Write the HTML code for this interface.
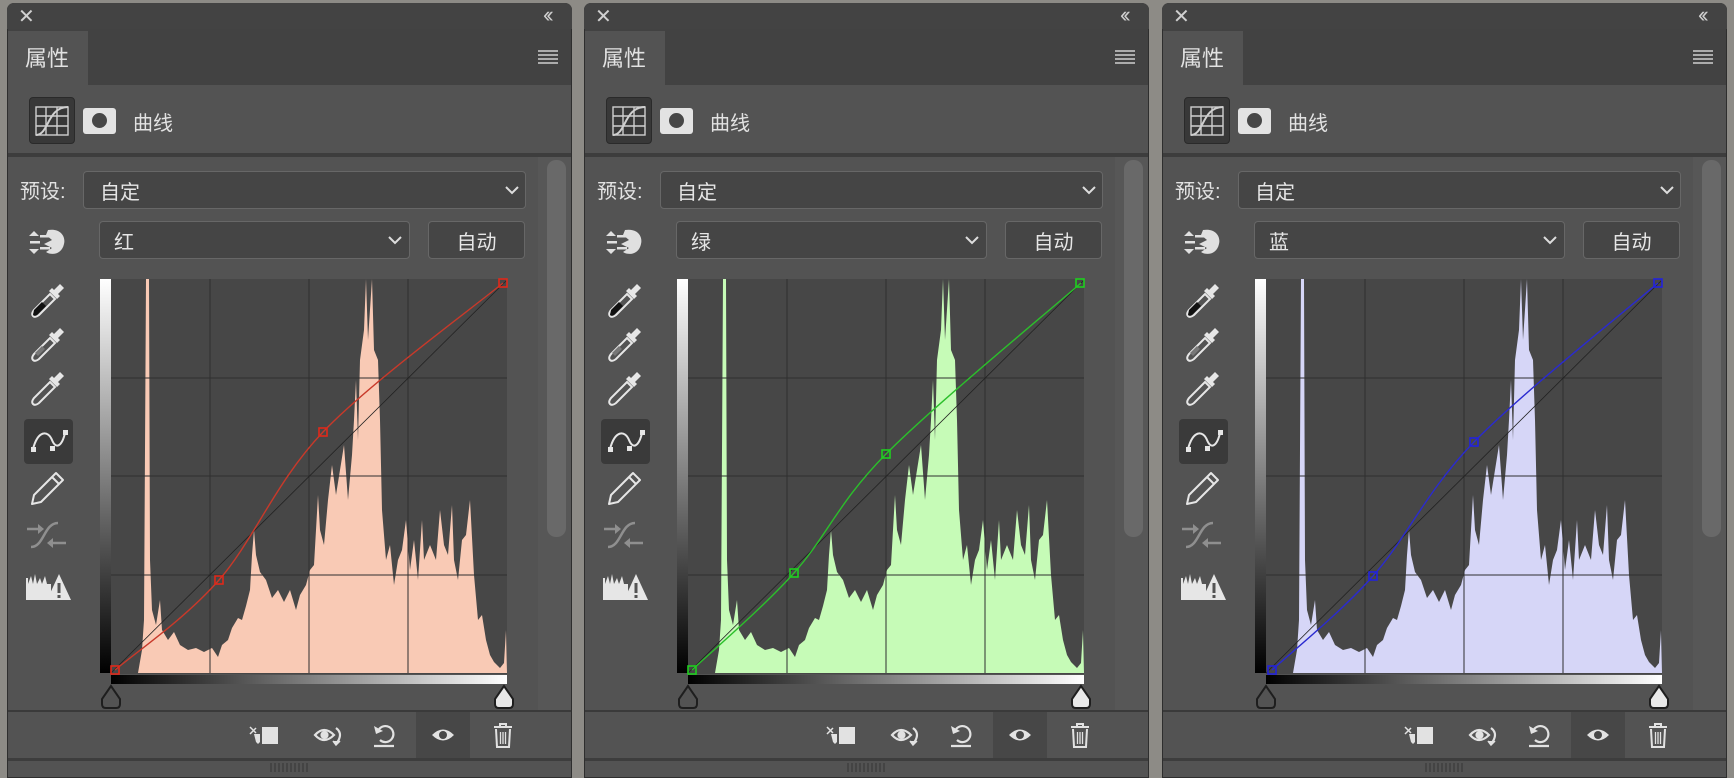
<!DOCTYPE html>
<html><head><meta charset="utf-8">
<style>
*{margin:0;padding:0;box-sizing:border-box}
body{width:1734px;height:778px;overflow:hidden;background:#8d8b86;font-family:"Liberation Sans","Noto Sans CJK SC",sans-serif;color:#e2e2e2;position:relative}
.wrap{position:absolute;top:0;width:580px;height:778px}
.panel{position:absolute;left:7px;top:3px;width:565px;height:775px;background:#535353;border:1px solid #2e2e2e;border-radius:7px 7px 0 0;overflow:hidden}
.a{position:absolute}
.title{left:7px;top:3px;width:565px;height:26px;background:#434343;border-radius:7px 7px 0 0}
.tabbar{left:8px;top:29px;width:563px;height:56px;background:#424242}
.tab{left:8px;top:31px;width:80px;height:54px;background:#535353;font-size:22px;padding:10px 0 0 17px}
.sep{left:8px;top:153px;width:563px;height:4px;background:#3d3d3d}
.dd{background:#454545;border:1px solid #676767;border-radius:4px;font-size:20px;color:#e6e6e6}
.txt{font-size:20px;color:#e2e2e2}
.foot{left:8px;top:710px;width:563px;height:2px;background:#3a3a3a}
.hl{left:416px;top:712px;width:54px;height:48px;background:#474747}
.bot{left:8px;top:758px;width:563px;height:3px;background:#3d3d3d}
.scroll{left:547px;top:160px;width:19px;height:377px;background:#696969;border-radius:9px}
.track{left:538px;top:157px;width:33px;height:553px;background:#575757}
</style></head><body>

<div class="wrap" style="left:0">
<div class="panel"></div>
<div class="a title"></div>
<div class="a" style="left:18px;top:4px;font-size:20px;color:#d0d0d0">✕</div>
<div class="a" style="left:543px;top:2px;font-size:22px;color:#cfcfcf;letter-spacing:-4px">‹‹</div>
<div class="a tabbar"></div>
<div class="a tab">属性</div>
<svg class="a" style="left:538px;top:50px" width="20" height="14"><g stroke="#d0d0d0" stroke-width="1.6"><line x1="0" y1="1" x2="20" y2="1"/><line x1="0" y1="5" x2="20" y2="5"/><line x1="0" y1="9" x2="20" y2="9"/><line x1="0" y1="13" x2="20" y2="13"/></g></svg>
<div class="a" style="left:29px;top:97px;width:46px;height:47px;background:#383838;border:1px solid #2a2a2a;border-radius:4px"></div>
<svg class="a" style="left:35px;top:106px" width="34" height="30"><g stroke="#cfcfcf" stroke-width="1.4" fill="none"><rect x="1" y="1" width="32" height="28"/><line x1="11" y1="1" x2="11" y2="29"/><line x1="22" y1="1" x2="22" y2="29"/><line x1="1" y1="10" x2="33" y2="10"/><line x1="1" y1="20" x2="33" y2="20"/><path d="M1 29 C14 29 12 1 33 1" stroke-width="2"/></g></svg>
<div class="a" style="left:83px;top:108px;width:33px;height:26px;background:#e3e3e3;border-radius:3px"></div>
<div class="a" style="left:92px;top:113px;width:15px;height:15px;background:#474747;border-radius:50%"></div>
<div class="a txt" style="left:133px;top:107px">曲线</div>
<div class="a sep"></div>
<div class="a track"></div>
<div class="a scroll"></div>
<div class="a txt" style="left:20px;top:175px">预设:</div>
<div class="a dd" style="left:83px;top:171px;width:443px;height:38px;padding:4px 0 0 16px">自定</div>
<svg class="a" style="left:505px;top:186px" width="14" height="9"><path d="M1 1 L7 7 L13 1" stroke="#ddd" stroke-width="2" fill="none"/></svg>
<svg class="a" style="left:28px;top:228px" width="38" height="30"><g fill="#e0e0e0"><path d="M1 8 L6 3 L11 8Z M1 21 L6 26 L11 21Z"/><rect x="2" y="13" width="10" height="2.5"/><rect x="12" y="7" width="10" height="2.5"/><rect x="12" y="19" width="10" height="2.5"/><path d="M20 2 C32 0 38 8 36 16 C34 26 24 28 18 24 L24 20 L16 16 L24 12 L18 7Z"/></g></svg>
<div class="a dd ch" style="left:99px;top:221px;width:311px;height:38px;padding:4px 0 0 14px">红</div>
<svg class="a" style="left:388px;top:236px" width="14" height="9"><path d="M1 1 L7 7 L13 1" stroke="#ddd" stroke-width="2" fill="none"/></svg>
<div class="a dd" style="left:428px;top:221px;width:97px;height:38px;text-align:center;padding-top:4px">自动</div>
<svg class="a" style="left:30px;top:282px" width="36" height="130"><g fill="#e6e6e6" stroke="#e6e6e6">
<g><path d="M30 2 L34 6 L28 12 L30 14 L27 17 L19 9 L22 6 L24 8Z" stroke="none"/><path d="M20 12 L25 17 L9 33 Q5 36 3 34 Q1 32 4 28Z" fill="none" stroke-width="2"/><path d="M4 28 L12 20 L16 24 L8 32 Q5 35 3 33Z" fill="#111" stroke="none"/></g>
<g transform="translate(0,44)"><path d="M30 2 L34 6 L28 12 L30 14 L27 17 L19 9 L22 6 L24 8Z" stroke="none"/><path d="M20 12 L25 17 L9 33 Q5 36 3 34 Q1 32 4 28Z" fill="none" stroke-width="2"/><path d="M5 27 L12 20 L15 23 L8 30Z" fill="#777" stroke="none"/></g>
<g transform="translate(0,88)"><path d="M30 2 L34 6 L28 12 L30 14 L27 17 L19 9 L22 6 L24 8Z" stroke="none"/><path d="M20 12 L25 17 L9 33 Q5 36 3 34 Q1 32 4 28Z" fill="none" stroke-width="2"/></g>
</g></svg>
<div class="a" style="left:24px;top:419px;width:49px;height:45px;background:#3a3a3a;border-radius:4px"></div>
<svg class="a" style="left:30px;top:428px" width="38" height="26"><path d="M3 21 C8 2 18 2 22 12 C26 22 32 18 35 5" stroke="#e6e6e6" stroke-width="2" fill="none"/><g fill="#e6e6e6"><rect x="1" y="19" width="5" height="5"/><rect x="20" y="18" width="5" height="5"/><rect x="33" y="2" width="5" height="5"/></g></svg>
<svg class="a" style="left:30px;top:470px" width="36" height="36"><path d="M26 3 L33 10 L11 32 L2 34 L4 25Z M22 7 L29 14" stroke="#e6e6e6" stroke-width="2" fill="none" stroke-linejoin="round"/></svg>
<svg class="a" style="left:26px;top:520px" width="42" height="30"><g stroke="#8f8f8f" stroke-width="2.5" fill="none"><path d="M5 27 C18 27 18 3 32 3"/><line x1="1" y1="9" x2="14" y2="9"/><line x1="24" y1="23" x2="40" y2="23"/></g><g fill="#8f8f8f"><path d="M12 4 L18 9 L12 14Z"/><path d="M27 18 L21 23 L27 28Z"/></g></svg>
<svg class="a" style="left:25px;top:570px" width="46" height="32"><g fill="#e6e6e6"><path d="M1 30 L1 8 L3 8 L3 14 L6 6 L8 14 L10 4 L12 14 L15 8 L17 14 L20 6 L22 14 L26 14 L26 30Z"/><path d="M34 4 L46 30 L22 30Z"/></g><rect x="32.5" y="13" width="3" height="10" fill="#535353"/><rect x="32.5" y="25" width="3" height="3" fill="#535353"/></svg>
<div class="a" style="left:100px;top:279px;width:11px;height:394px;background:linear-gradient(#fff,#000)"></div>
<div class="a" style="left:111px;top:675px;width:396px;height:9px;background:linear-gradient(90deg,#000,#fff)"></div>
<svg class="a" style="left:0;top:0" width="580" height="778">
<rect x="111" y="279" width="396" height="395" fill="#474747"/>
<polygon class="hist" fill="#f9cab5" points="111,673 138,673 142,650 144,620 146,279 149,279 150,560 152,610 156,625 160,600 162,630 168,640 174,632 180,645 188,650 196,648 204,652 212,648 218,657 222,645 228,640 232,628 238,618 242,620 246,606 250,590 252,555 254,530 256,555 260,572 266,580 272,598 278,590 284,602 290,590 296,610 300,595 306,585 310,570 314,565 318,495 320,530 324,545 328,500 332,465 336,495 340,470 344,445 348,500 352,455 354,420 356,380 358,440 360,360 364,330 366,279 368,340 372,279 374,350 378,360 380,420 382,510 386,560 390,545 394,585 398,560 402,550 406,520 410,570 414,540 418,580 422,520 424,560 430,545 436,560 440,510 444,545 448,555 452,505 454,560 458,580 462,540 466,535 470,500 474,575 478,620 482,615 486,640 490,655 494,662 500,668 504,663 506,630 507,673"/>
<g stroke="#2f2f2f" stroke-width="1"><line x1="210" y1="279" x2="210" y2="673"/><line x1="309" y1="279" x2="309" y2="673"/><line x1="408" y1="279" x2="408" y2="673"/><line x1="111" y1="378" x2="507" y2="378"/><line x1="111" y1="476" x2="507" y2="476"/><line x1="111" y1="575" x2="507" y2="575"/></g>
<line x1="111" y1="673" x2="506" y2="281" stroke="#222" stroke-width="0.8"/>
<path class="curve" d="M115 670 C132.3 655 184.3 619.7 219 580 C253.7 540.3 275.7 481.5 323 432 C370.3 382.5 473 307.8 503 283" stroke="#c8392a" stroke-width="1.4" fill="none"/>
<g class="pts" fill="none" stroke="#e0281a" stroke-width="1.6"><rect x="111" y="666" width="8" height="8"/><rect x="215" y="576" width="8" height="8"/><rect x="319" y="428" width="8" height="8"/><rect x="499" y="279" width="8" height="8"/></g>
<path d="M111 686 L102 699 L102 704 Q102 708 106 708 L116 708 Q120 708 120 704 L120 699Z" fill="#535353" stroke="#1e1e1e" stroke-width="2"/>
<path d="M504 686 L495 699 L495 704 Q495 708 499 708 L509 708 Q513 708 513 704 L513 699Z" fill="#e8e8e8" stroke="#1e1e1e" stroke-width="2"/>
</svg>
<div class="a foot"></div>
<div class="a hl"></div>
<svg class="a" style="left:248px;top:722px" width="270" height="28"><g fill="#e2e2e2" stroke="#e2e2e2">
<g stroke="none"><rect x="14" y="5" width="16" height="17"/><path d="M2 5 L8 11 M2 12 L8 6" stroke="#e2e2e2" stroke-width="1.5"/><path d="M6 12 L12 12 L12 20 L10 22 L8 20Z"/></g>
<g transform="translate(66,0)" fill="none" stroke-width="2.2"><path d="M1 13 Q10 3 20 13 Q10 23 1 13Z"/><circle cx="10.5" cy="13" r="3" fill="#e2e2e2"/><path d="M22 6 Q30 12 22 22"/><path d="M19 19 L22 23 L26 19" fill="#e2e2e2" stroke-width="1.5"/></g>
<g transform="translate(124,0)" fill="none" stroke-width="2.2"><path d="M6 9 A8 8 0 1 1 8 18"/><path d="M2 4 L4 12 L11 9Z" fill="#e2e2e2" stroke="none"/><line x1="2" y1="24" x2="22" y2="24"/></g>
<g transform="translate(183,0)"><path d="M1 13 Q12 2 23 13 Q12 24 1 13Z" stroke="none"/><circle cx="12" cy="13" r="4" fill="#474747" stroke="none"/></g>
<g transform="translate(244,0)" fill="none" stroke-width="2"><path d="M2 5 L20 5 M8 5 L8 2 L14 2 L14 5"/><path d="M4 7 L5 25 L17 25 L18 7"/><path d="M8.5 10 L8.5 22 M11 10 L11 22 M13.5 10 L13.5 22" stroke-width="1.3"/></g>
</g></svg>
<div class="a bot"></div>
<div class="a" style="left:270px;top:763px;width:40px;height:9px;background:repeating-linear-gradient(90deg,#444 0 2px,transparent 2px 4px)"></div>
</div>

<div id="p2" class="wrap" style="left:577px"></div>
<div id="p3" class="wrap" style="left:1155px"></div>

<script>
(function(){
var src=document.querySelector('.wrap');
var cfg=[
 {id:'p2',name:'绿',fill:'#c6fbb7',stroke:'#2bbf2b',pt:'#1ed01e',
  d:'M115 670 C132 653.8 184.7 609 217 573 C249.3 537 261.2 502.3 309 454 C356.8 405.7 471.5 311.5 504 283',
  p:[[115,670],[217,573],[309,454],[503,283]]},
 {id:'p3',name:'蓝',fill:'#d6d6f7',stroke:'#2a2ad0',pt:'#2222dd',
  d:'M117 670 C133.8 654.3 184.3 614 218 576 C251.7 538 271.5 490.8 319 442 C366.5 393.2 472.3 309.5 503 283',
  p:[[117,670],[218,576],[319,442],[503,283]]}
];
cfg.forEach(function(c){
 var w=document.getElementById(c.id);
 w.innerHTML=src.innerHTML;
 w.querySelector('.ch').textContent=c.name;
 w.querySelector('.hist').setAttribute('fill',c.fill);
 var cu=w.querySelector('.curve');cu.setAttribute('d',c.d);cu.setAttribute('stroke',c.stroke);
 var g=w.querySelector('.pts');g.setAttribute('stroke',c.pt);
 var r=g.querySelectorAll('rect');
 for(var i=0;i<4;i++){r[i].setAttribute('x',c.p[i][0]-4);r[i].setAttribute('y',c.p[i][1]-4);}
});
})();
</script>
</body></html>
